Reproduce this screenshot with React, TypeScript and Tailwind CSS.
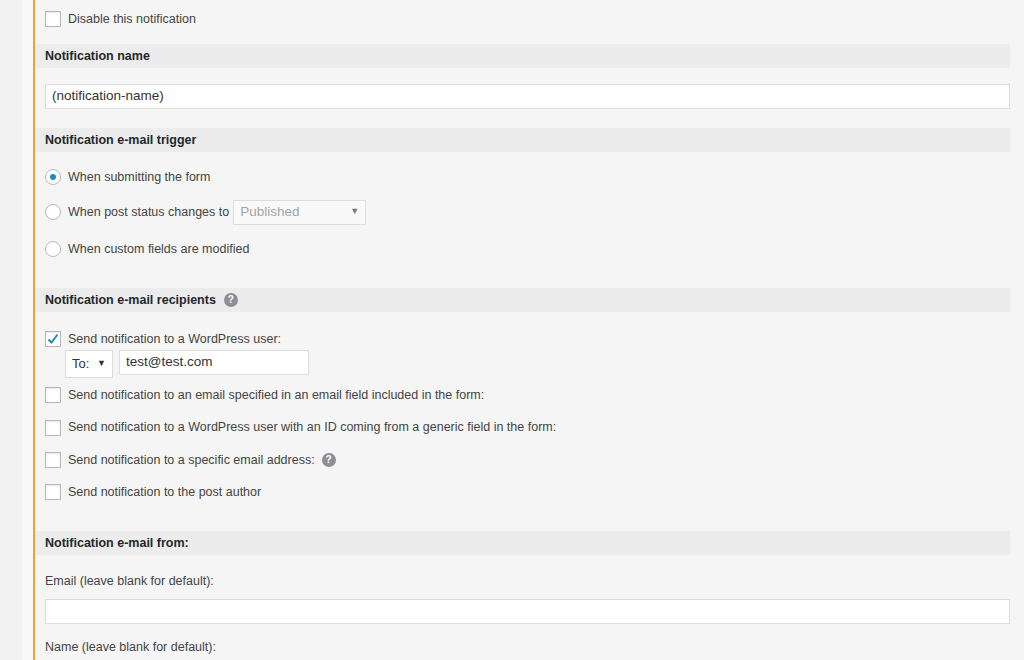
import React from "react";

const Check = ({ on }: { on?: boolean }) => (
  <span className="w-4 h-4 border border-[#b4b9be] bg-white flex items-center justify-center shrink-0 shadow-[inset_0_1px_2px_rgba(0,0,0,0.1)]">
    {on && (
      <svg width="14" height="14" viewBox="0 0 14 14">
        <path d="M2.5 7.5 L5.5 10.5 L11.5 2.5" stroke="#1e8cbe" strokeWidth="2" fill="none" />
      </svg>
    )}
  </span>
);

const Radio = ({ on }: { on?: boolean }) => (
  <span className="w-4 h-4 rounded-full border border-[#b4b9be] bg-white flex items-center justify-center shrink-0">
    {on && <span className="w-[6px] h-[6px] rounded-full bg-[#1e8cbe]" />}
  </span>
);

const Help = () => (
  <span className="w-[14px] h-[14px] rounded-full bg-[#8c8f94] text-white text-[10px] font-bold flex items-center justify-center leading-none">?</span>
);

const Header = ({ children }: { children: React.ReactNode }) => (
  <div className="h-6 bg-[#ececec] pl-[10px] flex items-center gap-2 font-semibold text-[#23282d] mr-[14px]">{children}</div>
);

const Row = ({ children, h = "h-8" }: { children: React.ReactNode; h?: string }) => (
  <div className={`${h} flex items-center gap-[7px] pl-[10px]`}>{children}</div>
);

export default function App() {
  return (
    <div className="w-[1024px] h-[660px] overflow-hidden flex bg-[#f1f1f1] text-[12.5px] text-[#444]" style={{ fontFamily: "'Liberation Sans', Arial, sans-serif" }}>
      <div className="w-[22px] bg-[#f1f1f1]" />
      <div className="w-[11px] bg-[#f8f8f8]" />
      <div className="w-[2px] bg-[#f0a030]" />
      <div className="flex-1 bg-[#f5f5f5] flex flex-col">
        <div className="h-[36px] pt-[2px] flex items-center gap-[7px] pl-[10px]">
          <Check />
          <span>Disable this notification</span>
        </div>
        <div className="h-[8px]" />
        <Header>Notification name</Header>
        <div className="h-[16px]" />
        <div className="ml-[10px] mr-[14px] h-[25px] bg-white border border-[#ddd] flex items-center px-[6px] text-[13.5px] text-[#333]">(notification-name)</div>
        <div className="h-[19px]" />
        <Header>Notification e-mail trigger</Header>
        <div className="h-[10px]" />
        <Row h="h-[30px]"><Radio on /><span>When submitting the form</span></Row>
        <Row h="h-[40px]">
          <Radio />
          <span>When post status changes to</span>
          <span className="w-[133px] h-[25px] border border-[#ddd] bg-[#f9f9f9] flex items-center justify-between px-[6px] text-[13.5px] text-[#a0a5aa] -ml-[3px]">
            Published<span className="text-[9px] text-[#777]">▼</span>
          </span>
        </Row>
        <Row h="h-[34px]"><Radio /><span>When custom fields are modified</span></Row>
        <div className="h-[22px]" />
        <div className="h-[25px]"><Header>Notification e-mail recipients <Help /></Header></div>
        <div className="h-[15px]" />
        <Row h="h-[22px]"><Check on /><span>Send notification to a WordPress user:</span></Row>
        <div className="flex items-start gap-[6px] pl-[30px] h-[28px]">
          <span className="w-[48px] h-[28px] border border-[#ddd] bg-white flex items-center justify-between px-[6px] text-[13px] text-[#333]">To:<span className="text-[9px]">▼</span></span>
          <span className="w-[190px] h-[25px] border border-[#ddd] bg-white flex items-center px-[6px] text-[13.5px] text-[#333]">test@test.com</span>
        </div>
        <Row h="h-[34px]"><Check /><span>Send notification to an email specified in an email field included in the form:</span></Row>
        <Row h="h-[31px]"><Check /><span>Send notification to a WordPress user with an ID coming from a generic field in the form:</span></Row>
        <Row h="h-[34px]"><Check /><span>Send notification to a specific email address:</span><Help /></Row>
        <Row h="h-[30px]"><Check /><span>Send notification to the post author</span></Row>
        <div className="h-[24px]" />
        <Header>Notification e-mail from:</Header>
        <div className="h-[14px] " />
        <div className="pl-[10px] h-[24px] flex items-center">Email (leave blank for default):</div>
        <div className="h-[6px]" />
        <div className="ml-[10px] mr-[14px] h-[25px] bg-white border border-[#ddd]" />
        <div className="h-[11px]" />
        <div className="pl-[10px] h-[24px] flex items-center">Name (leave blank for default):</div>
      </div>
    </div>
  );
}
